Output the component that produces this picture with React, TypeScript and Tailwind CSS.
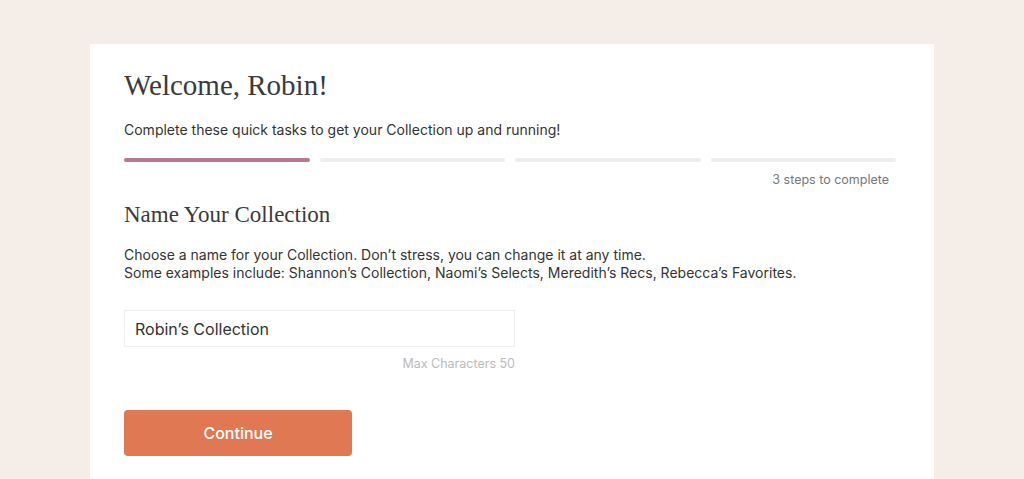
export default function App() {
  const steps = [true, false, false, false]
  return (
    <div className="w-[1024px] h-[479px] overflow-hidden bg-[#f5ede8] flex justify-center pt-[44px]">
      <div className="w-[844px] bg-white pl-[34px] pr-[38px] pt-[21px] text-[#333]" style={{ fontFamily: 'Inter, "Open Sans", sans-serif' }}>
        <h1 className="text-[29px] leading-[40px] font-light text-[#3a3a3a]" style={{ fontFamily: '"Liberation Serif", serif' }}>
          Welcome, Robin!
        </h1>
        <p className="mt-[16px] text-[14px] leading-[18px]">
          Complete these quick tasks to get your Collection up and running!
        </p>
        <div className="mt-[19px] flex gap-[10px]">
          {steps.map((done, i) => (
            <div key={i} className={`h-[4px] flex-1 rounded-full ${done ? "bg-[#b87a8a]" : "bg-[#eeeeee]"}`}></div>
          ))}
        </div>
        <div className="mt-[9px] pr-[7px] text-right text-[12.5px] leading-[18px] text-[#777]">
          3 steps to complete
        </div>
        <h2 className="mt-[11px] text-[23px] leading-[30px] font-light text-[#3a3a3a]" style={{ fontFamily: '"Liberation Serif", serif' }}>
          Name Your Collection
        </h2>
        <p className="mt-[16px] text-[14px] leading-[18px]">
          Choose a name for your Collection. Don’t stress, you can change it at any time.
          <br />
          Some examples include: Shannon’s Collection, Naomi’s Selects, Meredith’s Recs, Rebecca’s Favorites.
        </p>
        <div className="mt-[28px] w-[391px]">
          <div className="h-[37px] border border-[#eeeeee] flex items-center px-[10px] text-[16px] text-[#333]">
            Robin’s Collection
          </div>
          <div className="mt-[9px] text-right text-[12.5px] leading-[16px] text-[#bbbbbb]">
            Max Characters 50
          </div>
        </div>
        <button className="mt-[38px] w-[228px] h-[46px] rounded-[4px] bg-[#e07853] text-white text-[16px] font-medium">
          Continue
        </button>
      </div>
    </div>
  )
}
